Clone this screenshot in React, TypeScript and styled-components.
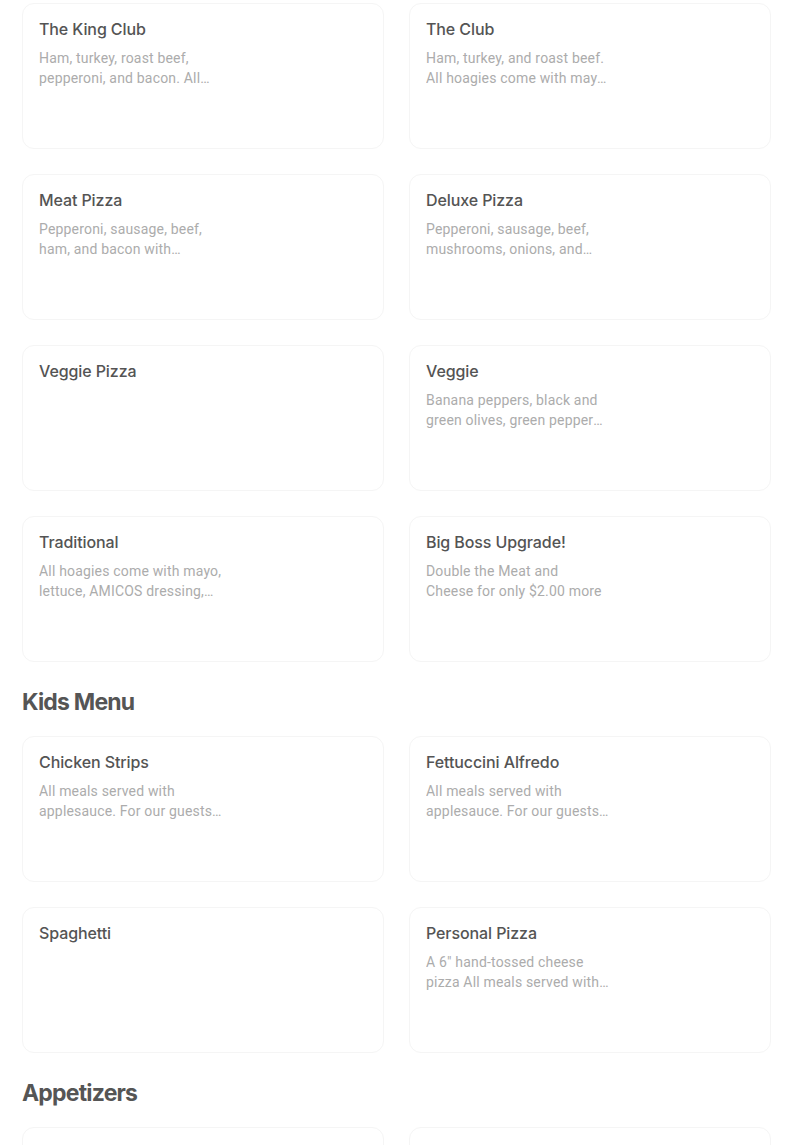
import styled, { createGlobalStyle } from "styled-components";

const GlobalStyle = createGlobalStyle`
  html, body {
    margin: 0;
    padding: 0;
    background: #ffffff;
  }
  body {
    font-family: Inter, "Liberation Sans", sans-serif;
    overflow: hidden;
  }
`;

const Page = styled.div`
  width: 749px;
  padding: 3px 0 0 22px;
  display: flex;
  flex-direction: column;
`;

const Section = styled.section`
  display: flex;
  flex-direction: column;
`;

const SectionTitle = styled.h2`
  margin: 24px 0 18px;
  font-size: 23px;
  line-height: 32px;
  font-weight: 700;
  letter-spacing: -0.8px;
  color: #555555;
`;

const Grid = styled.div`
  display: grid;
  grid-template-columns: 1fr 1fr;
  column-gap: 25px;
  row-gap: 25px;
`;

const Card = styled.div`
  height: 146px;
  box-sizing: border-box;
  border: 1px solid #f5f5f5;
  border-radius: 12px;
  padding: 15px 16px;
  background: #fff;
`;

const ItemName = styled.div`
  font-size: 16px;
  line-height: 20px;
  font-weight: 500;
  letter-spacing: -0.1px;
  color: #545454;
  margin-bottom: 9px;
`;

const ItemDesc = styled.div`
  width: 183px;
  font-family: Roboto, "Liberation Sans", sans-serif;
  font-size: 14px;
  line-height: 20px;
  font-weight: 400;
  letter-spacing: 0.18px;
  color: #acacac;
  display: -webkit-box;
  -webkit-line-clamp: 2;
  -webkit-box-orient: vertical;
  overflow: hidden;
`;

type Item = { name: string; desc?: string };

const top: Item[] = [
  { name: "The King Club", desc: "Ham, turkey, roast beef, pepperoni, and bacon. All hoagies come with mayo, lettuce" },
  { name: "The Club", desc: "Ham, turkey, and roast beef. All hoagies come with mayo lettuce" },
  { name: "Meat Pizza", desc: "Pepperoni, sausage, beef, ham, and bacon with mozzarella cheese" },
  { name: "Deluxe Pizza", desc: "Pepperoni, sausage, beef, mushrooms, onions, and green peppers" },
  { name: "Veggie Pizza" },
  { name: "Veggie", desc: "Banana peppers, black and green olives, green peppers, mushrooms" },
  { name: "Traditional", desc: "All hoagies come with mayo, lettuce, AMICOS dressing, tomatoes" },
  { name: "Big Boss Upgrade!", desc: "Double the Meat and Cheese for only $2.00 more" },
];

const kids: Item[] = [
  { name: "Chicken Strips", desc: "All meals served with applesauce. For our guests 12 and under" },
  { name: "Fettuccini Alfredo", desc: "All meals served with applesauce. For our guests 12 and under" },
  { name: "Spaghetti" },
  { name: "Personal Pizza", desc: "A 6\" hand-tossed cheese pizza All meals served with applesauce" },
];

const appetizers: Item[] = [
  { name: "Mozzarella Sticks", desc: "Served with marinara sauce" },
  { name: "Breaded Mushrooms Basket", desc: "Served with ranch dressing" },
];

function ItemCard({ item }: { item: Item }) {
  return (
    <Card>
      <ItemName>{item.name}</ItemName>
      {item.desc && <ItemDesc>{item.desc}</ItemDesc>}
    </Card>
  );
}

export default function App() {
  return (
    <>
      <GlobalStyle />
      <Page>
        <Grid>
          {top.map((it) => (
            <ItemCard key={it.name} item={it} />
          ))}
        </Grid>
        <Section>
          <SectionTitle>Kids Menu</SectionTitle>
          <Grid>
            {kids.map((it) => (
              <ItemCard key={it.name} item={it} />
            ))}
          </Grid>
        </Section>
        <Section>
          <SectionTitle>Appetizers</SectionTitle>
          <Grid>
            {appetizers.map((it) => (
              <ItemCard key={it.name} item={it} />
            ))}
          </Grid>
        </Section>
      </Page>
    </>
  );
}
